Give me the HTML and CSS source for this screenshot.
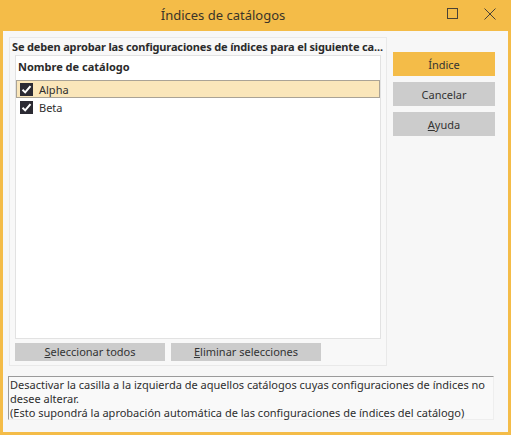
FILE: index.html
```html
<!DOCTYPE html>
<html lang="es">
<head>
<meta charset="utf-8">
<title>Índices de catálogos</title>
<link rel="stylesheet" href="styles.css">
</head>
<body>
<div class="window">
  <div class="titlebar">
    <div class="title">Índices de catálogos</div>
    <div class="controls">
      <svg class="ctl max" width="12" height="12" viewBox="0 0 12 12"><rect x="0.5" y="0.5" width="10" height="10" fill="none" stroke="#4a4236" stroke-width="1"/></svg>
      <svg class="ctl close" width="12" height="12" viewBox="0 0 12 12"><path d="M0.5 0.5 L11.5 11.5 M11.5 0.5 L0.5 11.5" stroke="#4a4236" stroke-width="1" fill="none"/></svg>
    </div>
  </div>
  <div class="content">
    <div class="top">
      <div class="panel">
        <div class="panel-title">Se deben aprobar las configuraciones de índices para el siguiente ca...</div>
        <div class="listbox">
          <div class="list-head">Nombre de catálogo</div>
          <div class="row selected">
            <span class="check"><svg width="13" height="13" viewBox="0 0 13 13"><path d="M2.5 6.8 L5.2 9.4 L10.5 3.2" stroke="#fff" stroke-width="2" fill="none"/></svg></span>
            <span class="label">Alpha</span>
          </div>
          <div class="row">
            <span class="check"><svg width="13" height="13" viewBox="0 0 13 13"><path d="M2.5 6.8 L5.2 9.4 L10.5 3.2" stroke="#fff" stroke-width="2" fill="none"/></svg></span>
            <span class="label">Beta</span>
          </div>
        </div>
        <div class="panel-buttons">
          <button class="btn wide"><u>S</u>eleccionar todos</button>
          <button class="btn wide"><u>E</u>liminar selecciones</button>
        </div>
      </div>
      <div class="side">
        <button class="btn side-btn primary">Índice</button>
        <button class="btn side-btn">Cancelar</button>
        <button class="btn side-btn"><u>A</u>yuda</button>
      </div>
    </div>
    <div class="message">Desactivar la casilla a la izquierda de aquellos catálogos cuyas configuraciones de índices no<br>desee alterar.<br>(Esto supondrá la aprobación automática de las configuraciones de índices del catálogo)</div>
  </div>
</div>
</body>
</html>
```
FILE: styles.css
```css
html, body {
  margin: 0;
  padding: 0;
  background: #ffffff;
}
body {
  font-family: "Noto Sans", "Open Sans", sans-serif;
  color: #2e2e2e;
}
.window {
  width: 511px;
  height: 435px;
  box-sizing: border-box;
  background: #f4bc48;
  padding: 0 3px 3px 3px;
  display: flex;
  flex-direction: column;
}
.titlebar {
  height: 31px;
  display: flex;
  align-items: center;
}
.title {
  width: 440px;
  text-align: center;
  font-size: 13px;
  color: #3a3428;
  padding-bottom: 1px;
}
.controls {
  display: flex;
  gap: 25px;
  margin-left: 4px;
  padding-bottom: 3px;
}
.ctl { display: block; }
.content {
  flex: 1;
  background: #f7f7f7;
  padding: 6px 0 0 5px;
  display: flex;
  flex-direction: column;
}
.top {
  display: flex;
}
.panel {
  width: 378px;
  height: 329px;
  box-sizing: border-box;
  border: 1px solid #e9e9e9;
  background: #f8f8f8;
  margin-left: 1px;
  display: flex;
  flex-direction: column;
  padding: 0 5px 0 5px;
}
.panel-title {
  font-size: 11px;
  font-weight: bold;
  letter-spacing: -0.15px;
  height: 17px;
  line-height: 17px;
  margin-left: -3px;
  margin-right: -5px;
  margin-top: 0;
  white-space: nowrap;
  color: #2b2b2b;
}
.listbox {
  height: 284px;
  box-sizing: border-box;
  background: #ffffff;
  border: 1px solid #e2e2e2;
  display: flex;
  flex-direction: column;
}
.list-head {
  font-size: 11px;
  font-weight: bold;
  height: 24px;
  line-height: 22px;
  padding-left: 2px;
  color: #2b2b2b;
}
.row {
  height: 18px;
  box-sizing: border-box;
  display: flex;
  align-items: center;
  padding-left: 3px;
  border: 1px solid transparent;
  font-size: 11px;
}
.row.selected {
  background: #fae6ba;
  border-color: #aaa396;
}
.check {
  width: 13px;
  height: 13px;
  background: #2b2a33;
  display: inline-block;
  margin-right: 6px;
}
.check svg { display: block; }
.label { color: #2e2e2e; }
.panel-buttons {
  display: flex;
  gap: 6px;
  margin-top: 4px;
}
.btn {
  font-family: "Noto Sans", "Open Sans", sans-serif;
  font-size: 11px;
  color: #333333;
  background: #cccccc;
  border: none;
  padding: 0;
  margin: 0;
}
.btn u { text-decoration: underline; }
.wide {
  width: 150px;
  height: 18px;
  line-height: 18px;
}
.side {
  display: flex;
  flex-direction: column;
  margin-left: 6px;
  margin-top: 15px;
  gap: 6px;
}
.side-btn {
  width: 102px;
  height: 24px;
}
.primary {
  background: #f4bc48;
}
.message {
  margin-top: 10px;
  width: 486px;
  height: 44px;
  box-sizing: border-box;
  border-top: 1px solid #9a9a9a;
  border-left: 1px solid #9a9a9a;
  border-right: 1px solid #eeeeee;
  border-bottom: 1px solid #eeeeee;
  background: #f9f9f9;
  font-size: 11px;
  line-height: 14px;
  padding: 1px 0 0 1px;
  color: #2e2e2e;
}
```
